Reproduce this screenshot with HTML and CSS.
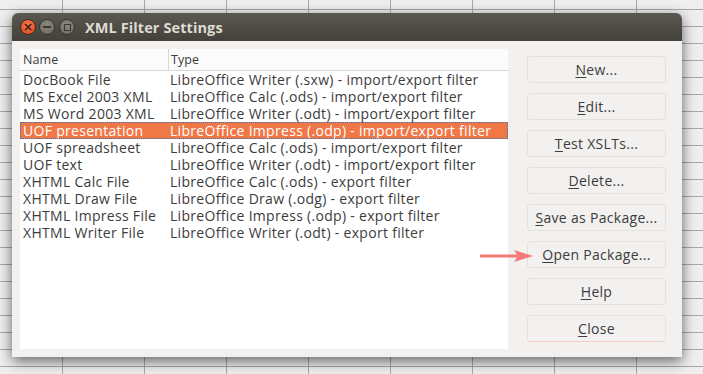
FILE: index.html
```html
<!DOCTYPE html>
<html lang="en">
<head>
    <meta charset="UTF-8">
    <title>XML Filter Settings</title>
    <link rel="stylesheet" href="styles.css">
</head>
<body>
    <div class="desktop">
        <div class="window">
            <div class="titlebar">
                <div class="controls">
                    <span class="ctl close">&#215;</span>
                    <span class="ctl min"><i class="bar"></i></span>
                    <span class="ctl max"><i class="box"></i></span>
                </div>
                <div class="title">XML Filter Settings</div>
            </div>
            <div class="content">
                <div class="list">
                    <div class="list-head">
                        <div class="col-name">Name</div>
                        <div class="col-type">Type</div>
                    </div>
                    <div class="row"><div class="col-name">DocBook File</div><div class="col-type">LibreOffice Writer (.sxw) - import/export filter</div></div>
                    <div class="row"><div class="col-name">MS Excel 2003 XML</div><div class="col-type">LibreOffice Calc (.ods) - import/export filter</div></div>
                    <div class="row"><div class="col-name">MS Word 2003 XML</div><div class="col-type">LibreOffice Writer (.odt) - import/export filter</div></div>
                    <div class="row selected"><div class="col-name">UOF presentation</div><div class="col-type">LibreOffice Impress (.odp) - import/export filter</div></div>
                    <div class="row"><div class="col-name">UOF spreadsheet</div><div class="col-type">LibreOffice Calc (.ods) - import/export filter</div></div>
                    <div class="row"><div class="col-name">UOF text</div><div class="col-type">LibreOffice Writer (.odt) - import/export filter</div></div>
                    <div class="row"><div class="col-name">XHTML Calc File</div><div class="col-type">LibreOffice Calc (.ods) - export filter</div></div>
                    <div class="row"><div class="col-name">XHTML Draw File</div><div class="col-type">LibreOffice Draw (.odg) - export filter</div></div>
                    <div class="row"><div class="col-name">XHTML Impress File</div><div class="col-type">LibreOffice Impress (.odp) - export filter</div></div>
                    <div class="row"><div class="col-name">XHTML Writer File</div><div class="col-type">LibreOffice Writer (.odt) - export filter</div></div>
                </div>
                <div class="buttons">
                    <button><u>N</u>ew...</button>
                    <button><u>E</u>dit...</button>
                    <button><u>T</u>est XSLTs...</button>
                    <button><u>D</u>elete...</button>
                    <button><u>S</u>ave as Package...</button>
                    <button class="marked"><u>O</u>pen Package...
                        <svg class="arrow" width="54" height="14" viewBox="0 0 54 14">
                            <line x1="1" y1="7" x2="38" y2="7" stroke="#f47a78" stroke-width="3" stroke-linecap="round"/>
                            <polygon points="34,1 53,7 34,13 38,7" fill="#f47a78"/>
                        </svg>
                    </button>
                    <button><u>H</u>elp</button>
                    <button class="default"><u>C</u>lose</button>
                </div>
            </div>
        </div>
    </div>
</body>
</html>
```

FILE: styles.css
```css
body {
    margin: 0;
    width: 703px;
    height: 374px;
    overflow: hidden;
    font-family: "Open Sans", "Noto Sans", sans-serif;
    background-color: #efefef;
    background-image:
        repeating-linear-gradient(to bottom, transparent 0, transparent 9px, #a8a8a8 9px, #a8a8a8 10px, transparent 10px, transparent 17px),
        repeating-linear-gradient(to right, transparent 0, transparent 62px, #a8a8a8 62px, #a8a8a8 63px, transparent 63px, transparent 82px);
}
.desktop {
    padding: 13px 0 0 12px;
}
.window {
    width: 670px;
    height: 344px;
    background-color: #f2f1f0;
    border-radius: 6px 6px 0 0;
    box-shadow: 0 4px 14px rgba(0, 0, 0, 0.6);
    display: flex;
    flex-direction: column;
}
.titlebar {
    height: 28px;
    display: flex;
    align-items: center;
    background: linear-gradient(to bottom, #5b5850, #43413b);
    border-radius: 6px 6px 0 0;
}
.controls {
    display: flex;
    gap: 3px;
    padding-left: 8px;
}
.ctl {
    width: 16px;
    height: 16px;
    border-radius: 50%;
    display: flex;
    align-items: center;
    justify-content: center;
    box-sizing: border-box;
}
.close {
    background: radial-gradient(circle at 50% 35%, #f4774d, #e0461b);
    border: 1px solid #4a2a1c;
    color: #3a1c12;
    font-family: "DejaVu Sans", sans-serif;
    font-size: 12px;
    font-weight: bold;
    line-height: 1;
}
.min, .max {
    background: radial-gradient(circle at 50% 35%, #8b8880, #6a675f);
    border: 1px solid #36342f;
}
.controls .max {
    margin-left: 1px;
}
.bar {
    width: 8px;
    height: 2px;
    background-color: #3b3934;
}
.box {
    width: 5px;
    height: 5px;
    border: 1.5px solid #3b3934;
}
.title {
    margin-left: 10px;
    color: #dfdbd2;
    font-weight: bold;
    font-size: 14.5px;
    letter-spacing: 0.1px;
}
.content {
    display: flex;
    gap: 19px;
    padding: 8px 16px 8px 8px;
}
.list {
    width: 488px;
    height: 300px;
    background-color: white;
    font-size: 14px;
    letter-spacing: 0.3px;
    color: #3c3c3c;
}
.list-head {
    display: flex;
    height: 21px;
    align-items: center;
    border-bottom: 1px solid #d6d6d6;
    background-color: #fbfbfb;
    font-size: 12.5px;
    letter-spacing: 0.1px;
}
.list-head .col-name {
    border-right: 1px solid #d6d6d6;
    height: 21px;
    line-height: 21px;
}
.row {
    display: flex;
    height: 17px;
    line-height: 17px;
    white-space: nowrap;
}
.col-name {
    width: 145px;
    padding-left: 3px;
}
.col-type {
    padding-left: 2px;
}
.row.selected {
    background-color: #f07746;
    color: white;
    outline: 1px dotted #3a70c0;
    outline-offset: -1px;
}
.buttons {
    display: flex;
    flex-direction: column;
    gap: 10px;
    padding-top: 7px;
}
button {
    position: relative;
    width: 139px;
    height: 27px;
    background-color: #f2f1f0;
    border: 1px solid #e4e2de;
    border-radius: 3px;
    font-family: inherit;
    font-size: 14px;
    letter-spacing: 0.3px;
    color: #3c3c3c;
    padding: 0;
}
button u {
    text-underline-offset: 2px;
}
button.default {
    border-color: #e8e4e0 #e8e4e0 #f2cfc0 #e8e4e0;
}
.arrow {
    position: absolute;
    left: -48px;
    top: 7px;
}
```
